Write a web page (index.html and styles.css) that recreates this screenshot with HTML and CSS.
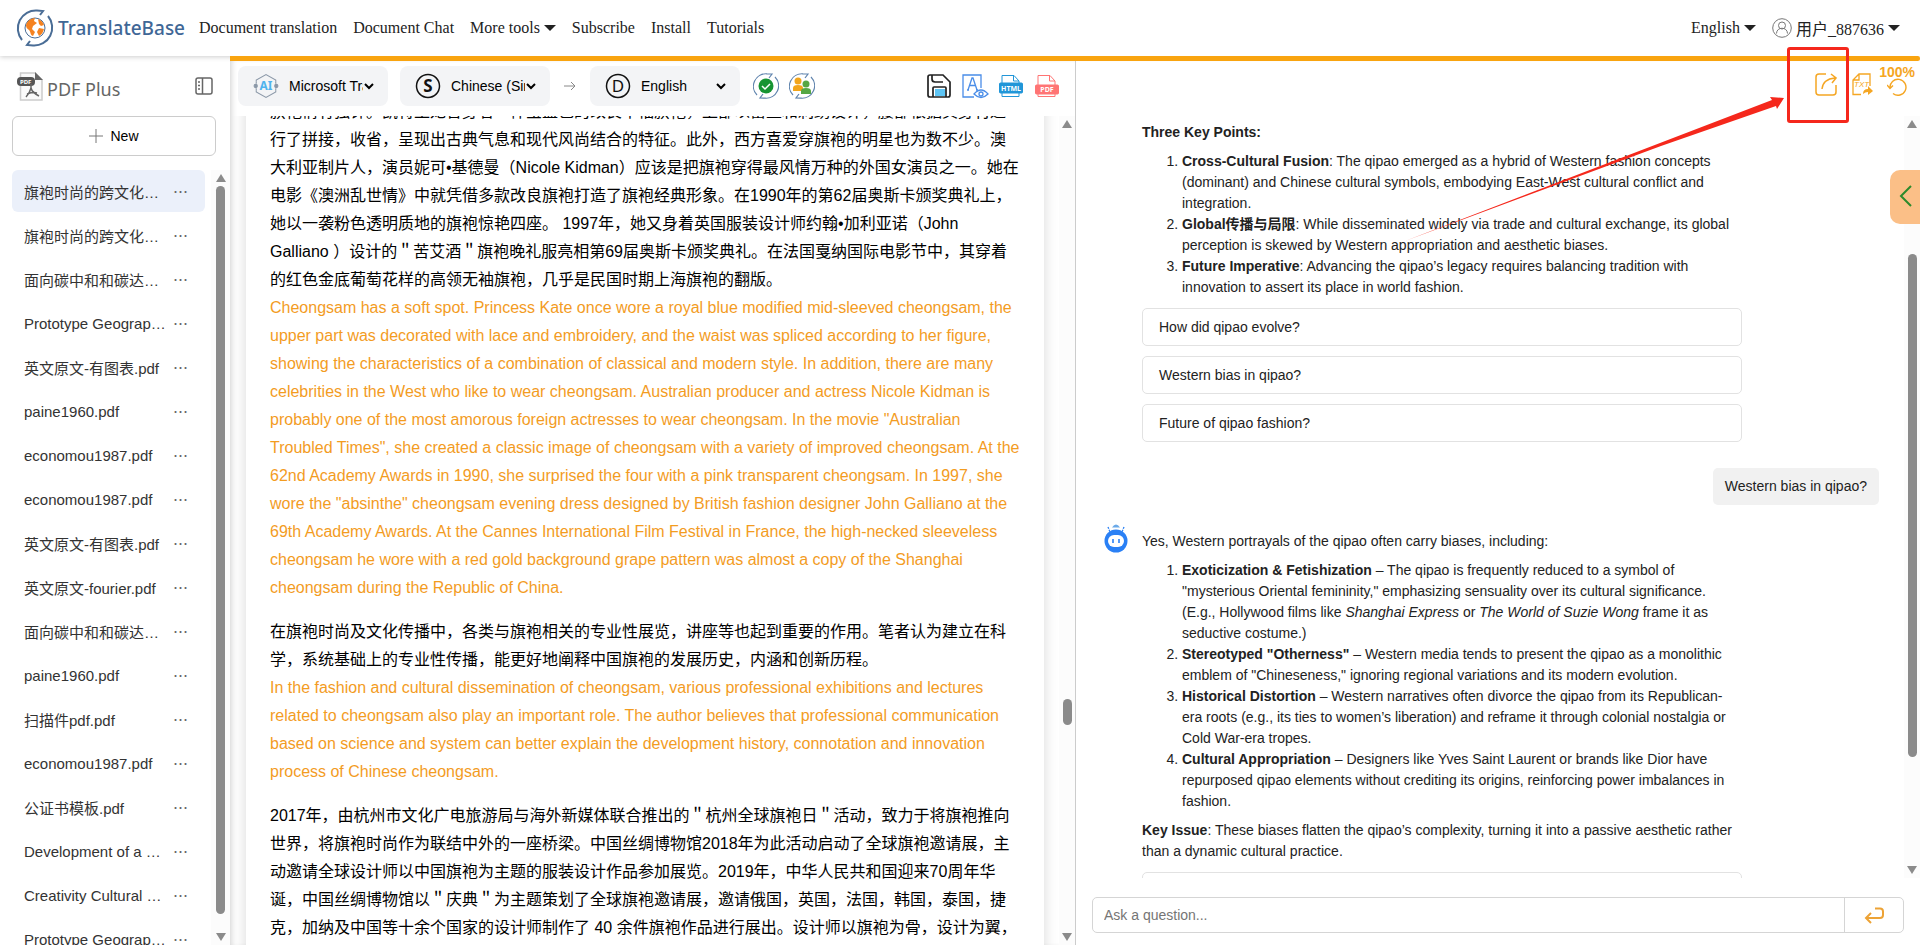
FILE: index.html
```html
<!DOCTYPE html>
<html lang="en">
<head>
  <meta charset="UTF-8">
  <title>TranslateBase - PDF Plus</title>
  <link rel="stylesheet" href="styles.css">
</head>
<body>
  <header class="topbar">
    <a class="logo" href="#">
      <svg width="38" height="38" viewBox="0 0 38 38" fill="none">
        <g stroke="#4a6d96" stroke-width="2">
          <path d="M6 31A18 18 0 0 1 21 1.500L27 2l-3 4"/>
          <path d="M32 7A18 18 0 0 1 17 36.500L11 36l3-4"/>
        </g>
        <circle cx="19" cy="19" r="10" fill="#fff" stroke="#4a6d96"/>
        <path d="M10 16c1-4 5-7 9-7l-1 3 3 2-4 3-1 3 3 3-2 4c-3-1-2-4-4-6-2-1-3-3-3-5zM22 10c3 1 5 3 6 6l-3 1-2-2zM23 19l5 1c-1 4-3 6-5 7l-2-4z" fill="#f58220"/>
      </svg>
      <span>TranslateBase</span>
    </a>
    <nav class="menu">
      <a href="#">Document translation</a>
      <a href="#">Document Chat</a>
      <a href="#">More tools <i class="caret"></i></a>
      <a href="#">Subscribe</a>
      <a href="#">Install</a>
      <a href="#">Tutorials</a>
    </nav>
    <div class="account">
      <a href="#">English <i class="caret"></i></a>
      <a href="#">
        <svg width="20" height="20" viewBox="0 0 20 20" fill="none" stroke="#777">
          <circle cx="10" cy="10" r="9.300"/>
          <circle cx="10" cy="7.500" r="3.500"/>
          <path d="M4.500 15.500c0-7 11-7 11 0"/>
        </svg>
        <span>用户_887636</span><i class="caret"></i>
      </a>
    </div>
  </header>

  <main class="workspace">
    <aside class="sidebar">
      <div class="brand">
        <svg width="26" height="29" viewBox="0 0 26 29" fill="none">
          <path d="M3.500 1H18l7 7v20H3.500z" stroke="#ccc" stroke-width="1.500" fill="#fafafa"/>
          <path d="M18 0v8h8z" fill="#666"/>
          <rect y="5" width="18" height="9" rx="4" fill="#555"/>
          <text x="3" y="12" class="pdf-tag">PDF</text>
          <path d="M14 12v4c-1 4-3 7-5 9M14 16c1 4 4 6 8 8M10 22c3-1 7-2 10-1" stroke="#666" stroke-width="1.500"/>
        </svg>
        <h1>PDF Plus</h1>
        <button class="icon-btn" aria-label="Toggle sidebar">
          <svg width="18" height="18" viewBox="0 0 18 18" fill="none" stroke="#666" stroke-width="1.500">
            <rect x="1" y="1" width="16" height="16" rx="2"/>
            <path d="M7.500 1v16M3 5h2M3 8.500h2M3 12h2"/>
          </svg>
        </button>
      </div>
      <button class="new-btn">
        <svg width="14" height="14" viewBox="0 0 14 14" stroke="#777"><path d="M7 0v14M0 7h14"/></svg>
        New
      </button>
      <div class="files">
        <ul class="file-list">
          <li class="active"><a href="#">旗袍时尚的跨文化传播</a><button>⋯</button></li>
          <li><a href="#">旗袍时尚的跨文化传播</a><button>⋯</button></li>
          <li><a href="#">面向碳中和和碳达峰目标</a><button>⋯</button></li>
          <li><a href="#">Prototype Geographical</a><button>⋯</button></li>
          <li><a href="#">英文原文-有图表.pdf</a><button>⋯</button></li>
          <li><a href="#">paine1960.pdf</a><button>⋯</button></li>
          <li><a href="#">economou1987.pdf</a><button>⋯</button></li>
          <li><a href="#">economou1987.pdf</a><button>⋯</button></li>
          <li><a href="#">英文原文-有图表.pdf</a><button>⋯</button></li>
          <li><a href="#">英文原文-fourier.pdf</a><button>⋯</button></li>
          <li><a href="#">面向碳中和和碳达峰目标</a><button>⋯</button></li>
          <li><a href="#">paine1960.pdf</a><button>⋯</button></li>
          <li><a href="#">扫描件pdf.pdf</a><button>⋯</button></li>
          <li><a href="#">economou1987.pdf</a><button>⋯</button></li>
          <li><a href="#">公证书模板.pdf</a><button>⋯</button></li>
          <li><a href="#">Development of a model</a><button>⋯</button></li>
          <li><a href="#">Creativity Cultural Management</a><button>⋯</button></li>
          <li><a href="#">Prototype Geographical</a><button>⋯</button></li>
        </ul>
        <div class="scrollbar"><i class="up"></i><span class="rail"><b class="thumb thumb-files"></b></span><i class="down"></i></div>
      </div>
    </aside>

    <div class="content">
      <div class="progress"></div>
      <div class="panes">
        <section class="doc">
          <div class="toolbar">
            <div class="picker">
              <svg width="26" height="26" viewBox="0 0 24 24" fill="none" stroke="#8b98a8">
                <path d="M3 8V6.500L12 1.500l9 5V8M3 16v1.500l9 5 9-5V16"/>
                <circle cx="2.500" cy="12" r="1.500" fill="#8b98a8"/><circle cx="21.500" cy="12" r="1.500" fill="#8b98a8"/>
                <path d="M3 8v2M3 14v2M21 8v2M21 14v2"/>
                <text x="6" y="16" class="ai-tag">AI</text>
              </svg>
              <select aria-label="Engine"><option>Microsoft Translator</option></select>
              <svg class="chevron" width="10" height="7" viewBox="0 0 10 7" fill="none"><path d="M1 1l4 4 4-4"/></svg>
            </div>
            <div class="picker">
              <svg width="26" height="26" viewBox="0 0 26 26" fill="none">
                <circle cx="13" cy="13" r="11.500" stroke="#111" stroke-width="1.500"/>
                <text x="13" y="19" class="letter">S</text>
              </svg>
              <select aria-label="Source language"><option>Chinese (Simplified)</option></select>
              <svg class="chevron" width="10" height="7" viewBox="0 0 10 7" fill="none"><path d="M1 1l4 4 4-4"/></svg>
            </div>
            <svg class="arrow" width="12" height="10" viewBox="0 0 12 10" fill="none" stroke="#888"><path d="M0 5h11M7 1l4 4-4 4"/></svg>
            <div class="picker">
              <svg width="26" height="26" viewBox="0 0 26 26" fill="none">
                <circle cx="13" cy="13" r="11.500" stroke="#111" stroke-width="1.500"/>
                <text x="13" y="19" class="letter letter-d">D</text>
              </svg>
              <select aria-label="Target language"><option>English</option></select>
              <svg class="chevron" width="10" height="7" viewBox="0 0 10 7" fill="none"><path d="M1 1l4 4 4-4"/></svg>
            </div>
            <button class="icon-btn round" aria-label="Translate">
              <svg width="26" height="26" viewBox="0 0 26 26" fill="none">
                <path d="M4 22A12.500 12.500 0 0 1 14 .8L19 1l-3 4M22 4A12.500 12.500 0 0 1 12 25.200L7 25l3-4" stroke="#5f83ad" stroke-width="1.200"/>
                <circle cx="13" cy="13" r="7.500" fill="#179433"/>
                <path d="M9 13l3 3 5-5" stroke="#fff" stroke-width="1.500"/>
              </svg>
            </button>
            <button class="icon-btn round" aria-label="Human translation">
              <svg width="26" height="26" viewBox="0 0 26 26" fill="none">
                <path d="M4 22A12.500 12.500 0 0 1 14 .8L19 1l-3 4M22 4A12.500 12.500 0 0 1 12 25.200L7 25l3-4" stroke="#5f83ad" stroke-width="1.200"/>
                <circle cx="9" cy="8" r="3.500" fill="#f2a51b"/><path d="M4 18v-3q0-3 5-3t5 3v3z" fill="#f2a51b"/>
                <circle cx="17" cy="11" r="3.500" fill="#55a744"/><path d="M12 21v-3q0-3 5-3t5 3v3z" fill="#55a744"/>
              </svg>
            </button>
            <div class="exports">
              <button class="icon-btn" aria-label="Save">
                <svg width="24" height="24" viewBox="0 0 24 24" fill="none" stroke="#222" stroke-width="1.700">
                  <path d="M3 1h13l7 7v13q0 2-2 2H3q-2 0-2-2V3q0-2 2-2z"/>
                  <path d="M5 1v4q0 3 3 3h8"/>
                  <path d="M6 23v-9q0-1 1-1h11q1 0 1 1v9"/><path d="M8 15h10v7H8z" fill="#5ec5f5" stroke="none"/>
                </svg>
              </button>
              <button class="icon-btn" aria-label="Preview">
                <svg class="preview" width="24" height="24" viewBox="0 0 24 24" fill="none" stroke="#4a8de8" stroke-width="1.300">
                  <path d="M18 14V1H0v22h11"/><path d="M5 16L9 4h1l4 12M6.500 11.500h6M4 16h2M13 16h2"/>
                  <path d="M11 20q7-8 14 0q-7 7-14 0z" fill="#fff"/><circle cx="18" cy="20" r="2"/>
                </svg>
              </button>
              <button class="icon-btn" aria-label="Export HTML">
                <svg width="24" height="24" viewBox="0 0 24 24" fill="none" stroke="#2196d8">
                  <path d="M3 9V1.500h12L20 7v2M14.500 1.500V7H20M3 19v3.500h17V19"/>
                  <rect x=".5" y="9" width="23" height="10" rx="1" fill="#2196d8"/>
                  <text x="12" y="17" class="format-tag">HTML</text>
                </svg>
              </button>
              <button class="icon-btn" aria-label="Export PDF">
                <svg width="24" height="24" viewBox="0 0 24 24" fill="none" stroke="#ff7474">
                  <path d="M3 11V1.500h12L20 7v4M14.500 1.500V7H20M3 20v2.500h17V20"/>
                  <rect x=".5" y="11" width="23" height="9" rx="1" fill="#ff7474"/>
                  <text x="12" y="18" class="format-tag">PDF</text>
                </svg>
              </button>
            </div>
          </div>
          <div class="doc-view">
            <article class="page">
              <p>旗袍情有独钟。凯特王妃曾身着一件宝蓝色的改良中袖旗袍，上部以蕾丝和刺绣设计，腰部根据其身材进行了拼接，收省，呈现出古典气息和现代风尚结合的特征。此外，西方喜爱穿旗袍的明星也为数不少。澳大利亚制片人，演员妮可•基德曼（Nicole Kidman）应该是把旗袍穿得最风情万种的外国女演员之一。她在电影《澳洲乱世情》中就凭借多款改良旗袍打造了旗袍经典形象。在1990年的第62届奥斯卡颁奖典礼上，她以一袭粉色透明质地的旗袍惊艳四座。 1997年，她又身着英国服装设计师约翰•加利亚诺（John Galliano ）设计的＂苦艾酒＂旗袍晚礼服亮相第69届奥斯卡颁奖典礼。在法国戛纳国际电影节中，其穿着的红色金底葡萄花样的高领无袖旗袍，几乎是民国时期上海旗袍的翻版。</p>
              <p class="translated">Cheongsam has a soft spot. Princess Kate once wore a royal blue modified mid-sleeved cheongsam, the upper part was decorated with lace and embroidery, and the waist was spliced according to her figure, showing the characteristics of a combination of classical and modern style. In addition, there are many celebrities in the West who like to wear cheongsam. Australian producer and actress Nicole Kidman is probably one of the most amorous foreign actresses to wear cheongsam. In the movie "Australian Troubled Times", she created a classic image of cheongsam with a variety of improved cheongsam. At the 62nd Academy Awards in 1990, she surprised the four with a pink transparent cheongsam. In 1997, she wore the "absinthe" cheongsam evening dress designed by British fashion designer John Galliano at the 69th Academy Awards. At the Cannes International Film Festival in France, the high-necked sleeveless cheongsam he wore with a red gold background grape pattern was almost a copy of the Shanghai cheongsam during the Republic of China.</p>
              <p>在旗袍时尚及文化传播中，各类与旗袍相关的专业性展览，讲座等也起到重要的作用。笔者认为建立在科学，系统基础上的专业性传播，能更好地阐释中国旗袍的发展历史，内涵和创新历程。</p>
              <p class="translated">In the fashion and cultural dissemination of cheongsam, various professional exhibitions and lectures related to cheongsam also play an important role. The author believes that professional communication based on science and system can better explain the development history, connotation and innovation process of Chinese cheongsam.</p>
              <p>2017年，由杭州市文化广电旅游局与海外新媒体联合推出的＂杭州全球旗袍日＂活动，致力于将旗袍推向世界，将旗袍时尚作为联结中外的一座桥梁。中国丝绸博物馆2018年为此活动启动了全球旗袍邀请展，主动邀请全球设计师以中国旗袍为主题的服装设计作品参加展览。2019年，中华人民共和国迎来70周年华诞，中国丝绸博物馆以＂庆典＂为主题策划了全球旗袍邀请展，邀请俄国，英国，法国，韩国，泰国，捷克，加纳及中国等十余个国家的设计师制作了 40 余件旗袍作品进行展出。设计师以旗袍为骨，设计为翼，</p>
            </article>
            <div class="scrollbar"><i class="up"></i><span class="rail"><b class="thumb thumb-doc"></b></span><i class="down"></i></div>
          </div>
        </section>

        <section class="chat">
          <div class="chat-tools">
            <button class="icon-btn" aria-label="Share">
              <svg width="22" height="23" viewBox="0 0 22 23" fill="none" stroke="#f5a623" stroke-width="1.500">
                <path d="M11 1H4Q1 1 1 4v15q0 3 3 3h14q3 0 3-3v-7"/><path d="M7 16Q8 6 20 5M16 1l5 4-4 5"/>
              </svg>
            </button>
            <button class="icon-btn" aria-label="Export text">
              <svg width="21" height="23" viewBox="0 0 21 23" fill="none" stroke="#f5a623" stroke-width="1.300">
                <path d="M9 21.500H1V7l6-6h11v12M7 1v6H1"/>
                <text x="2" y="14" class="txt-tag">TXT</text>
                <path d="M11 21q0-5 5-5v-3l5 5-5 4v-3q-3 0-5 2z" fill="#f5a623" stroke="none"/>
              </svg>
            </button>
            <div class="usage">
              <strong>100%</strong>
              <button class="icon-btn" aria-label="Refresh">
                <svg width="20" height="18" viewBox="0 0 20 18" fill="none" stroke="#f5a623" stroke-width="1.400">
                  <path d="M3 10A8 8 0 1 1 6 15.500M0 7l3 3.500L6 7.500"/>
                </svg>
              </button>
            </div>
          </div>
          <div class="chat-view">
            <div class="messages">
              <div class="message">
                <p><strong>Three Key Points:</strong></p>
                <ol>
                  <li><strong>Cross-Cultural Fusion</strong>: The qipao emerged as a hybrid of Western fashion concepts (dominant) and Chinese cultural symbols, embodying East-West cultural conflict and integration.</li>
                  <li><strong>Global传播与局限</strong>: While disseminated widely via trade and cultural exchange, its global perception is skewed by Western appropriation and aesthetic biases.</li>
                  <li><strong>Future Imperative</strong>: Advancing the qipao’s legacy requires balancing tradition with innovation to assert its place in world fashion.</li>
                </ol>
                <div class="suggestions">
                  <button>How did qipao evolve?</button>
                  <button>Western bias in qipao?</button>
                  <button>Future of qipao fashion?</button>
                </div>
              </div>
              <div class="question">Western bias in qipao?</div>
              <div class="message">
                <svg class="bot" width="24" height="29" viewBox="0 0 24 29" fill="none">
                  <circle cx="12" cy="17" r="11.500" fill="#2a80f5"/>
                  <rect x="4" y="11" width="16" height="12" rx="6" fill="#fff"/>
                  <path d="M9 15v4M15 15v4" stroke="#2a80f5" stroke-width="1.600"/>
                  <path d="M4 3l2 5M20 3l-2 5" stroke="#2a80f5" stroke-width="1.300" stroke-dasharray="2 1"/><path d="M8 3.500q4-6 8 0z" fill="#6aa9e8"/>
                </svg>
                <p>Yes, Western portrayals of the qipao often carry biases, including:</p>
                <ol>
                  <li><strong>Exoticization &amp; Fetishization</strong> – The qipao is frequently reduced to a symbol of "mysterious Oriental femininity," emphasizing sensuality over its cultural significance. (E.g., Hollywood films like <em>Shanghai Express</em> or <em>The World of Suzie Wong</em> frame it as seductive costume.)</li>
                  <li><strong>Stereotyped "Otherness"</strong> – Western media tends to present the qipao as a monolithic emblem of "Chineseness," ignoring regional variations and its modern evolution.</li>
                  <li><strong>Historical Distortion</strong> – Western narratives often divorce the qipao from its Republican-era roots (e.g., its ties to women’s liberation) and reframe it through colonial nostalgia or Cold War-era tropes.</li>
                  <li><strong>Cultural Appropriation</strong> – Designers like Yves Saint Laurent or brands like Dior have repurposed qipao elements without crediting its origins, reinforcing power imbalances in fashion.</li>
                </ol>
                <p><strong>Key Issue</strong>: These biases flatten the qipao’s complexity, turning it into a passive aesthetic rather than a dynamic cultural practice.</p>
                <div class="suggestions">
                  <button aria-label="Suggestion"></button>
                </div>
              </div>
            </div>
            <div class="scrollbar"><i class="up"></i><span class="rail"><b class="thumb thumb-chat"></b></span><i class="down"></i></div>
          </div>
          <form class="ask">
            <input type="text" placeholder="Ask a question..." aria-label="Ask a question">
            <button type="button" aria-label="Send">
              <svg width="20" height="17" viewBox="0 0 20 17" fill="none" stroke="#eda336" stroke-width="2">
                <path d="M11 1.500h5q3 0 3 3V8q0 3-3 3H2M7 6l-5 5 5 5"/>
              </svg>
            </button>
          </form>
        </section>
      </div>
    </div>
  </main>

  <!-- overlays -->
  <button class="drawer-tab" aria-label="Open drawer">
    <svg width="13" height="22" viewBox="0 0 13 22" fill="none" stroke="#2c8a2c" stroke-width="2"><path d="M12 1L2 11l10 10"/></svg>
  </button>
  <div class="callout"></div>
  <svg class="callout-arrow" width="380" height="146" viewBox="0 0 380 146">
    <path d="M0 145L255 47 367 4l-2-3 14 1-7 11-1-3L256 50z" fill="#f5281c"/>
  </svg>
</body>
</html>
```

FILE: styles.css
```css
* {
  box-sizing: border-box;
}
body {
  margin: 0;
  height: 100vh;
  display: flex;
  flex-direction: column;
  overflow: hidden;
  position: relative;
  background: #fff;
  color: #222;
  font-family: "Liberation Sans", "Noto Sans CJK SC", sans-serif;
  font-size: 14px;
}
a {
  color: inherit;
  text-decoration: none;
}
button, select, input {
  font: inherit;
  color: inherit;
}
button {
  cursor: pointer;
}
svg {
  flex: none;
}
.icon-btn {
  display: flex;
  padding: 0;
  border: none;
  background: none;
}

/* header */
.topbar {
  flex: none;
  height: 56px;
  padding: 0 20px 0 16px;
  display: flex;
  align-items: center;
  z-index: 1;
  box-shadow: 0 1px 5px rgba(0, 0, 0, 0.2);
  font-family: "Liberation Serif", "Noto Sans CJK SC", serif;
  font-size: 16px;
}
.logo {
  display: flex;
  align-items: center;
  gap: 4px;
  color: #3f6796;
  font-family: "Noto Sans", sans-serif;
  font-size: 19px;
  font-weight: 500;
}
.menu {
  display: flex;
  gap: 16px;
  margin-left: 14px;
}
.account {
  display: flex;
  gap: 16px;
  margin-left: auto;
}
.account a {
  display: flex;
  align-items: center;
  gap: 4px;
}
.caret {
  display: inline-block;
  border: 6px solid transparent;
  border-top-color: #222;
  border-bottom: 0;
  vertical-align: 2px;
}

.workspace {
  flex: 1;
  min-height: 0;
  display: flex;
}

/* sidebar */
.sidebar {
  flex: none;
  width: 230px;
  display: flex;
  flex-direction: column;
}
.brand {
  display: flex;
  align-items: center;
  height: 60px;
  padding: 0 17px;
  gap: 4px;
}
.brand h1 {
  margin: 5px auto 0 0;
  color: #666;
  font-family: "Noto Sans", sans-serif;
  font-size: 18px;
  font-weight: 400;
}
.pdf-tag {
  font: bold 6px "Noto Sans", sans-serif;
  fill: #fff;
}
.new-btn {
  flex: none;
  display: flex;
  align-items: center;
  justify-content: center;
  gap: 7px;
  height: 40px;
  margin: 0 14px 14px 12px;
  border: 1px solid #ccc;
  border-radius: 6px;
  background: #fff;
  color: #000;
}
.files {
  flex: 1;
  min-height: 0;
  display: flex;
}
.file-list {
  flex: 1;
  margin: 0 6px 0 12px;
  padding: 0;
  list-style: none;
  overflow: hidden;
  font-size: 15px;
}
.file-list li {
  display: flex;
  align-items: center;
  height: 42px;
  margin-bottom: 2px;
  padding: 0 17px 0 12px;
  border-radius: 6px;
  color: #333;
}
.file-list .active {
  background: #ebf0fa;
}
.file-list a {
  width: 144px;
  overflow: hidden;
  text-overflow: ellipsis;
  white-space: nowrap;
}
.file-list button {
  margin-left: auto;
  padding: 0;
  border: none;
  background: none;
  color: #666;
}

/* scrollbars */
.scrollbar {
  flex: none;
  width: 16px;
  display: flex;
  flex-direction: column;
  align-items: center;
  padding: 4px 0;
  background: #fcfcfc;
}
.scrollbar i {
  border: 5px solid transparent;
}
.scrollbar .up {
  border-top: 0;
  border-bottom: 8px solid #8b8b8b;
}
.scrollbar .down {
  border-bottom: 0;
  border-top: 8px solid #8b8b8b;
}
.files .scrollbar {
  width: 19px;
}
.rail {
  flex: 1;
  padding: 4px 0;
}
.thumb {
  display: block;
  width: 9px;
  border-radius: 5px;
  background: #8b8b8b;
}
.thumb-files {
  height: 98%;
}
.thumb-doc {
  height: 26px;
  margin-top: 567px;
}
.thumb-chat {
  height: 503px;
  margin-top: 122px;
}

/* content */
.content {
  flex: 1;
  min-width: 0;
  display: flex;
  flex-direction: column;
}
.progress {
  flex: none;
  height: 5px;
  border-radius: 0 3px 3px 0;
  background: #f9a40f;
  z-index: 2;
}
.panes {
  flex: 1;
  min-height: 0;
  display: grid;
  grid-template-columns: 846fr 844fr;
  grid-template-rows: minmax(0, 1fr);
}
.doc {
  min-width: 0;
  display: flex;
  flex-direction: column;
  border-right: 1px solid #ccc;
  box-shadow: inset 5px 0 6px -4px rgba(0, 0, 0, 0.2);
}
.toolbar {
  flex: none;
  height: 55px;
  padding: 5px 16px 10px 8px;
  display: flex;
  align-items: center;
}
.picker {
  display: flex;
  align-items: center;
  width: 150px;
  height: 40px;
  padding: 0 14px 0 15px;
  border-radius: 8px;
  background: #f3f4f6;
}
.picker + .picker {
  margin-left: 12px;
}
.picker select {
  flex: 1;
  min-width: 0;
  margin: 0 1px 0 10px;
  padding: 0;
  border: none;
  background: none;
  color: #000;
  appearance: none;
}
.chevron {
  stroke: #000;
  stroke-width: 2;
  pointer-events: none;
}
.arrow {
  margin: 0 14px;
}
.round {
  margin-left: 10px;
}
.picker + .round {
  margin-left: 13px;
}
.letter {
  font: bold 17px "Noto Sans", sans-serif;
  fill: #111;
  text-anchor: middle;
}
.letter-d {
  font-weight: 400;
}
.ai-tag {
  font: bold 11px "Noto Sans", sans-serif;
  fill: #4fb3ee;
  stroke: none;
}
.format-tag {
  font: bold 7px "Noto Sans", sans-serif;
  fill: #fff;
  stroke: none;
  text-anchor: middle;
}
.exports {
  display: flex;
  gap: 12px;
  margin-left: auto;
}
.preview {
  overflow: visible;
}
.doc-view {
  flex: 1;
  min-height: 0;
  display: flex;
  justify-content: space-between;
  overflow: hidden;
}
.page {
  flex: 1;
  margin: -18px 15px -18px 16px;
  padding: 0 23px 0 24px;
  box-shadow: 0 0 14px rgba(0, 0, 0, 0.15);
  background: #fff;
  color: #000;
  font-size: 16px;
  line-height: 28px;
}
.page p {
  margin: 0;
}
.page .translated {
  margin-bottom: 16px;
  color: #f39c1f;
}

/* chat */
.chat {
  min-width: 0;
  display: flex;
  flex-direction: column;
}
.chat-tools {
  flex: none;
  display: flex;
  align-items: center;
  justify-content: flex-end;
  gap: 15px;
  height: 55px;
  padding: 0 5px 8px 0;
}
.txt-tag {
  font: italic 8px "Liberation Sans", sans-serif;
  fill: #f5a623;
  stroke: none;
}
.usage {
  display: flex;
  flex-direction: column;
  align-items: center;
  align-self: flex-start;
  margin: 5px 0 0 -9px;
  color: #f5a623;
  line-height: 12px;
}
.chat-view {
  flex: 1;
  min-height: 0;
  display: flex;
  overflow: hidden;
}
.messages {
  flex: 1;
  padding: 1px 25px 0 66px;
  line-height: 21px;
}
.message {
  position: relative;
  max-width: 600px;
}
.message p {
  margin: 0;
  padding: 5px 0 8px;
}
.message ol {
  margin: 0;
  padding-left: 40px;
}
.message ol + p {
  padding: 8px 0 0;
}
.suggestions {
  display: flex;
  flex-direction: column;
  gap: 10px;
  padding-top: 10px;
}
.suggestions button {
  height: 38px;
  padding: 0 16px;
  border: 1px solid #e2e2e2;
  border-radius: 5px;
  background: #fff;
  text-align: left;
}
.question {
  width: fit-content;
  margin: 26px 0 21px auto;
  padding: 8px 12px;
  border-radius: 5px;
  background: #f1f1f1;
}
.bot {
  position: absolute;
  left: -38px;
  top: -2px;
}
.ask {
  flex: none;
  display: flex;
  height: 36px;
  margin: 19px 16px 12px;
  border: 1px solid #d5d5d5;
  border-radius: 5px;
}
.ask input {
  flex: 1;
  padding: 0 11px;
  border: none;
  background: none;
}
.ask button {
  display: flex;
  align-items: center;
  justify-content: center;
  width: 59px;
  border: none;
  border-left: 1px solid #d5d5d5;
  background: none;
}

/* overlays */
.drawer-tab {
  position: absolute;
  right: 0;
  top: 170px;
  z-index: 3;
  width: 30px;
  height: 54px;
  padding: 0;
  border: none;
  border-radius: 10px 0 0 10px;
  background: #fbbf87;
}
.callout {
  position: absolute;
  right: 71px;
  top: 47px;
  z-index: 3;
  width: 62px;
  height: 76px;
  border: 3px solid #f5281c;
  border-radius: 3px;
}
.callout-arrow {
  position: absolute;
  right: 135px;
  top: 96px;
  z-index: 3;
}
```
